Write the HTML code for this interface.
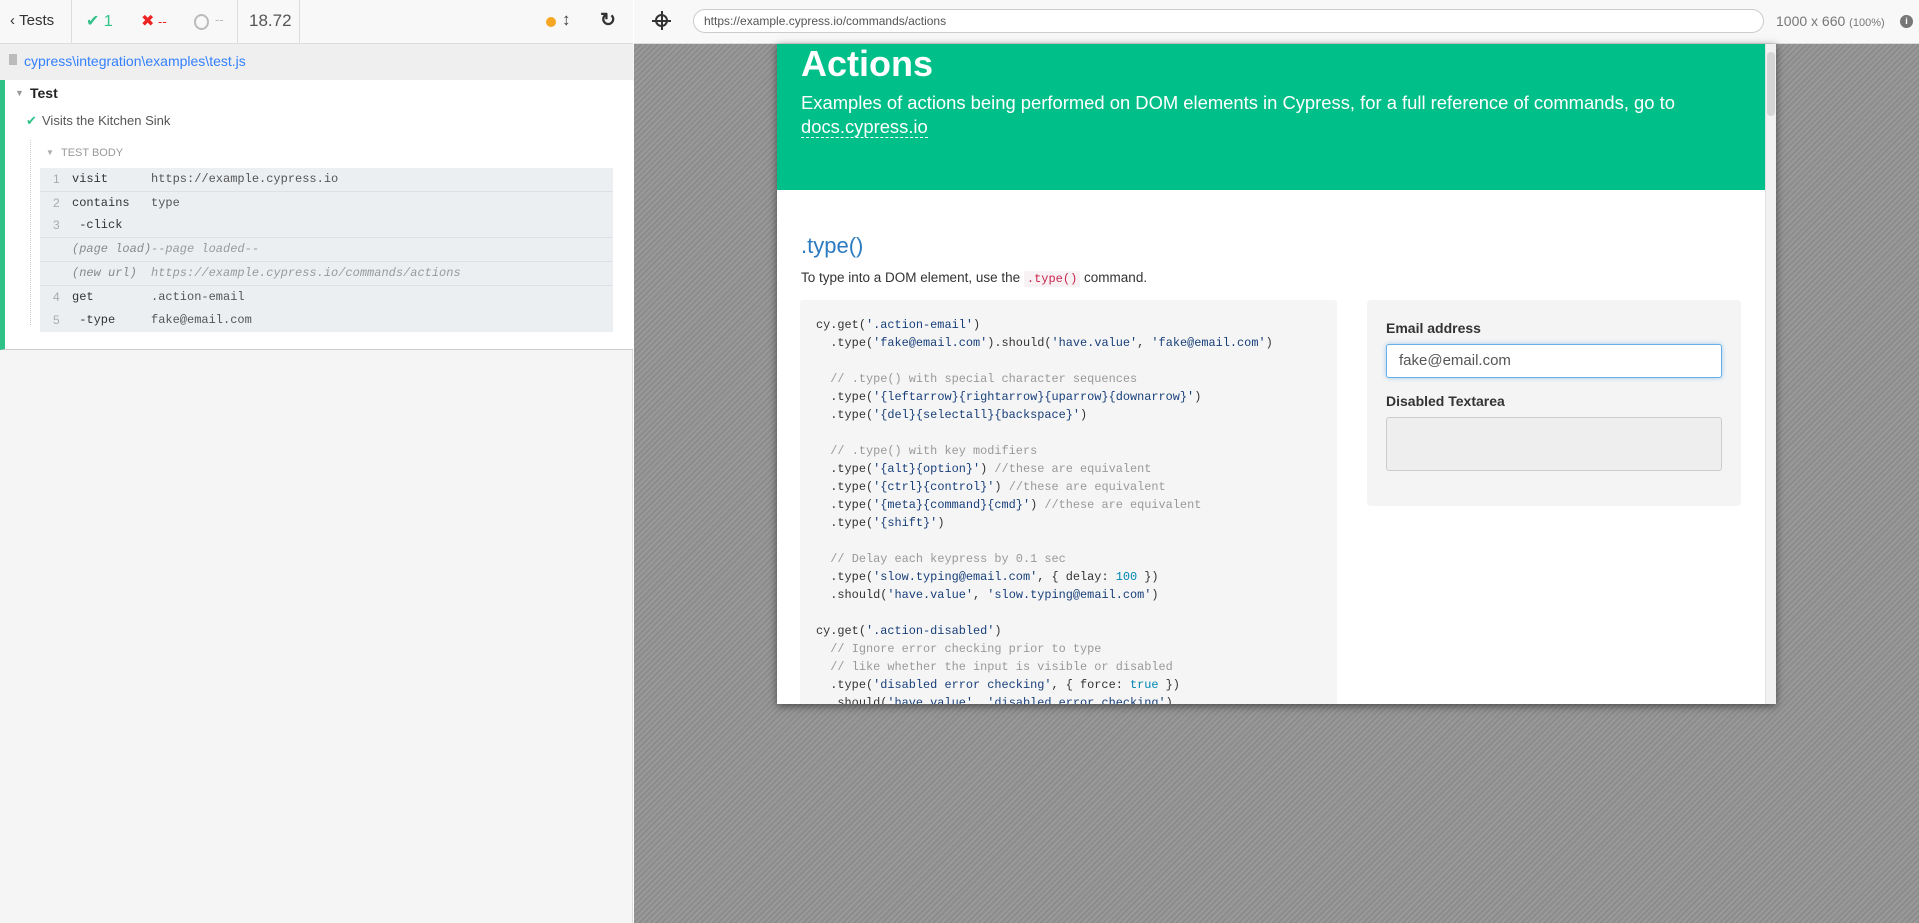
<!DOCTYPE html>
<html><head><meta charset="utf-8"><style>
*{box-sizing:border-box;margin:0;padding:0}
body{width:1919px;height:923px;overflow:hidden;font-family:"Liberation Sans",sans-serif;background:#fff;position:relative}
.abs{position:absolute}
#left{left:0;top:0;width:633px;height:923px;background:#f5f5f5;border-right:1px solid #ddd}
#topbar{left:0;top:0;width:633px;height:44px;background:#f8f8f8;border-bottom:1px solid #ddd}
.sep{position:absolute;top:0;width:1px;height:44px;background:#ddd}
#spec{left:0;top:44px;width:633px;height:36px;background:#efefef;box-shadow:0 2px 3px rgba(0,0,0,.12)}
#tests{left:0;top:80px;width:633px;height:270px;background:#fff;border-left:5px solid #2fc188;border-bottom:1px solid #ccc}
.row{position:absolute;left:40px;width:573px;height:23.6px;font-family:"Liberation Mono",monospace;font-size:12px;line-height:23.6px;color:#333}
.row .n{position:absolute;left:13px;color:#aaa;font-family:"Liberation Sans",sans-serif}
.row .c{position:absolute;left:32px}
.row .v{position:absolute;left:111px;color:#555}
.row.i{color:#888;font-style:italic}
#right{left:634px;top:0;width:1285px;height:923px;background:repeating-linear-gradient(-45deg,#8c8c8c 0 2px,#999 2px 4px)}
#rtop{left:634px;top:0;width:1285px;height:44px;background:#f8f8f8;border-bottom:1px solid #ddd}
#frame{left:777px;top:44px;width:999px;height:660px;background:#fff;box-shadow:0 2px 8px rgba(0,0,0,.5);overflow:hidden}
pre{font-family:"Liberation Mono",monospace;font-size:11.9px;line-height:18px;color:#333}
.s{color:#183f7a}.cm{color:#999}.nu{color:#0086b3}
</style></head><body>
<div id="left" class="abs"></div>
<div id="topbar" class="abs">
 <div class="abs" style="left:10px;top:12px;font-size:15px;color:#333">&#8249;&nbsp;Tests</div>
 <div class="sep" style="left:71px"></div>
 <div class="abs" style="left:86px;top:11px;font-size:16px;color:#2fc188">&#10004; 1</div>
 <div class="abs" style="left:141px;top:11px;font-size:16px;color:#e22">&#10006;<span style="font-size:13px"> --</span></div>
 <div class="abs" style="left:194px;top:14px;width:15px;height:16px;border:2px solid #bbb;border-radius:50%"></div>
 <div class="abs" style="left:215px;top:12px;font-size:13px;color:#bbb">--</div>
 <div class="sep" style="left:237px"></div>
 <div class="abs" style="left:249px;top:11px;font-size:17px;color:#555">18.72</div>
 <div class="sep" style="left:299px"></div>
 <div class="abs" style="left:546px;top:17px;width:10px;height:10px;border-radius:50%;background:#f6a623"></div>
 <div class="abs" style="left:562px;top:10px;font-size:17px;color:#444;font-weight:bold">&#8597;</div>
 <div class="abs" style="left:600px;top:9px;font-size:19px;color:#333;font-weight:bold">&#8635;</div>
</div>
<div id="spec" class="abs">
 <div class="abs" style="left:9px;top:10px;width:8px;height:11px;background:#bbb"></div>
 <div class="abs" style="left:24px;top:9px;font-size:14px;color:#3380ff">cypress\integration\examples\test.js</div>
</div>
<div id="tests" class="abs">
 <div class="abs" style="left:10px;top:8px;font-size:9px;color:#999">&#9660;</div>
 <div class="abs" style="left:25px;top:5px;font-size:14px;font-weight:bold;color:#222">Test</div>
 <div class="abs" style="left:21px;top:33px;font-size:13px;color:#2fc188">&#10004;</div>
 <div class="abs" style="left:37px;top:33px;font-size:13px;color:#555">Visits the Kitchen Sink</div>
 <div class="abs" style="left:25px;top:60px;width:0;height:185px;border-left:1px dotted #ccc"></div>
 <div class="abs" style="left:41px;top:68px;font-size:8px;color:#aaa">&#9660;</div>
 <div class="abs" style="left:56px;top:67px;font-size:11px;color:#999">TEST BODY</div>
</div>
<div class="abs" style="left:40px;top:168px;width:573px;height:164px;background:#eceff2"></div>
<div class="row" style="top:168px;border-bottom:1px solid #dde1e5"><span class="n">1</span><span class="c">visit</span><span class="v">https://example.cypress.io</span></div>
<div class="row" style="top:192px"><span class="n">2</span><span class="c">contains</span><span class="v">type</span></div>
<div class="row" style="top:214px;border-bottom:1px solid #dde1e5"><span class="n">3</span><span class="c">&nbsp;-click</span></div>
<div class="row i" style="top:238px;border-bottom:1px solid #dde1e5"><span class="c">(page load)</span><span class="v" style="color:#999">--page loaded--</span></div>
<div class="row i" style="top:262px;border-bottom:1px solid #dde1e5"><span class="c">(new url)</span><span class="v" style="color:#999">https://example.cypress.io/commands/actions</span></div>
<div class="row" style="top:286px"><span class="n">4</span><span class="c">get</span><span class="v">.action-email</span></div>
<div class="row" style="top:309px"><span class="n">5</span><span class="c">&nbsp;-type</span><span class="v">fake@email.com</span></div>

<div id="right" class="abs"></div>
<div id="rtop" class="abs">
 <div class="abs" style="left:21px;top:14px;width:13px;height:13px;border:2px solid #333;border-radius:50%"></div>
 <div class="abs" style="left:26.5px;top:11px;width:2px;height:19px;background:#333"></div>
 <div class="abs" style="left:18px;top:19.5px;width:19px;height:2px;background:#333"></div>
 <div class="abs" style="left:59px;top:9px;width:1071px;height:24px;border:1px solid #ccc;border-radius:12px;background:#fff;font-size:12px;color:#555;padding:4px 10px">https://example.cypress.io/commands/actions</div>
 <div class="abs" style="left:1142px;top:13px;font-size:14px;color:#777">1000 x 660 <span style="font-size:11px">(100%)</span></div>
 <div class="abs" style="left:1266px;top:15px;width:13px;height:13px;border-radius:50%;background:#777;color:#fff;font-size:9px;text-align:center;line-height:13px;font-weight:bold">i</div>
</div>
<div id="frame" class="abs">
 <div class="abs" style="left:0;top:0;width:988px;height:146px;background:#00bf88;color:#fff">
  <div class="abs" style="left:24px;top:-1px;font-size:36px;font-weight:bold">Actions</div>
  <div class="abs" style="left:24px;top:47px;width:950px;font-size:18.4px;line-height:24px">Examples of actions being performed on DOM elements in Cypress, for a full reference of commands, go to <span style="border-bottom:1px dashed #fff">docs.cypress.io</span></div>
 </div>
 <div class="abs" style="left:988px;top:0;width:11px;height:660px;background:#f1f1f1;border-left:1px solid #e0e0e0"><div style="margin:8px 1px;height:64px;background:#d5d5d5;border-radius:4px"></div></div>
 <div class="abs" style="left:24px;top:189px;font-size:22px;color:#2c7bc0">.type()</div>
 <div class="abs" style="left:24px;top:226px;font-size:13.5px;color:#333">To type into a DOM element, use the <span style="font-family:'Liberation Mono',monospace;font-size:12px;color:#c7254e;background:#f9f2f4;padding:1px 3px">.type()</span> command.</div>
 <div class="abs" style="left:23px;top:256px;width:537px;height:420px;background:#f5f5f5;border-radius:3px;padding:16px 16px">
<pre>cy.get(<span class="s">'.action-email'</span>)
  .type(<span class="s">'fake@email.com'</span>).should(<span class="s">'have.value'</span>, <span class="s">'fake@email.com'</span>)

  <span class="cm">// .type() with special character sequences</span>
  .type(<span class="s">'{leftarrow}{rightarrow}{uparrow}{downarrow}'</span>)
  .type(<span class="s">'{del}{selectall}{backspace}'</span>)

  <span class="cm">// .type() with key modifiers</span>
  .type(<span class="s">'{alt}{option}'</span>) <span class="cm">//these are equivalent</span>
  .type(<span class="s">'{ctrl}{control}'</span>) <span class="cm">//these are equivalent</span>
  .type(<span class="s">'{meta}{command}{cmd}'</span>) <span class="cm">//these are equivalent</span>
  .type(<span class="s">'{shift}'</span>)

  <span class="cm">// Delay each keypress by 0.1 sec</span>
  .type(<span class="s">'slow.typing@email.com'</span>, { delay: <span class="nu">100</span> })
  .should(<span class="s">'have.value'</span>, <span class="s">'slow.typing@email.com'</span>)

cy.get(<span class="s">'.action-disabled'</span>)
  <span class="cm">// Ignore error checking prior to type</span>
  <span class="cm">// like whether the input is visible or disabled</span>
  .type(<span class="s">'disabled error checking'</span>, { force: <span class="nu">true</span> })
  .should(<span class="s">'have.value'</span>, <span class="s">'disabled error checking'</span>)</pre>
 </div>
 <div class="abs" style="left:590px;top:256px;width:374px;height:206px;background:#f4f4f4;border-radius:4px">
  <div class="abs" style="left:19px;top:20px;font-size:14px;font-weight:bold;color:#333">Email address</div>
  <div class="abs" style="left:19px;top:44px;width:336px;height:34px;background:#fff;border:1px solid #66afe9;border-radius:3px;box-shadow:0 0 5px rgba(102,175,233,.6);font-size:15px;color:#555;padding:7px 12px">fake@email.com</div>
  <div class="abs" style="left:19px;top:93px;font-size:14px;font-weight:bold;color:#333">Disabled Textarea</div>
  <div class="abs" style="left:19px;top:117px;width:336px;height:54px;background:#eee;border:1px solid #ccc;border-radius:3px"></div>
 </div>
</div>
</body></html>
